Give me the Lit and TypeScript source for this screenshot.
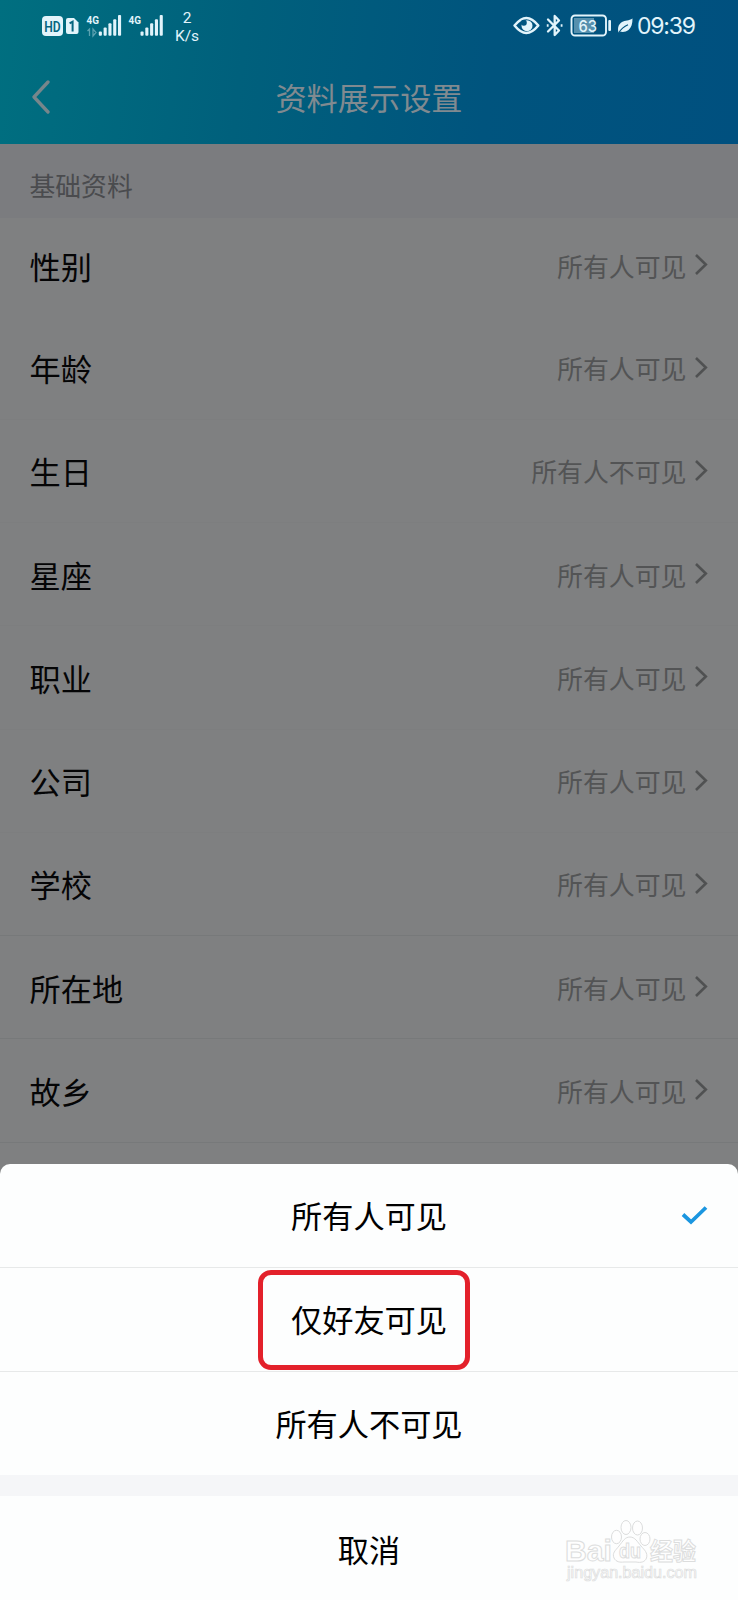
import { LitElement, html, css, svg } from "lit";
import { customElement } from "lit/decorators.js";

interface Item {
  label: string;
  value: string;
}

const ALL = "所有人可见";
const ITEMS: Item[] = [
  { label: "性别", value: ALL },
  { label: "年龄", value: ALL },
  { label: "生日", value: "所有人不可见" },
  { label: "星座", value: ALL },
  { label: "职业", value: ALL },
  { label: "公司", value: ALL },
  { label: "学校", value: ALL },
  { label: "所在地", value: ALL },
  { label: "故乡", value: ALL },
];

const bars = (x: number) =>
  [0, 1, 2, 3, 4].map(
    (i) => svg`<rect x=${x + i * 4.8} y=${31.5 - i * 4.1} width="3.1" height=${4.3 + i * 4.1} rx="1"/>`
  );

@customElement("status-bar")
class StatusBar extends LitElement {
  static styles = css`
    :host { display: flex; justify-content: space-between; height: 52px; color: #e2f4fb; font-family: Roboto, "Noto Sans", sans-serif; }
    svg { display: block; fill: currentColor; }
    .left, .right { display: flex; }
    .left { padding-left: 42px; }
    .speed { width: 40px; margin-left: 1px; padding-top: 9px; text-align: center; font-size: 15.5px; line-height: 18px; }
    .right { padding-right: 42px; }
    .time { width: 59px; padding-top: 11px; font-family: Inter, sans-serif; font-size: 23px; line-height: 31px; letter-spacing: -1.200px; white-space: nowrap; }
    .small { font: 700 11.5px "Roboto", sans-serif; }
  `;
  render() {
    return html`
      <div class="left">
        <svg width="124" height="52" viewBox="42 0 124 52">
          <rect x="42" y="16" width="21" height="20" rx="4" />
          <text x="44.3" y="31.6" font-family="Roboto" font-size="14.500" font-weight="600" fill="#05657f" textLength="16.4" lengthAdjust="spacingAndGlyphs">HD</text>
          <path d="M68 18h6l4.5 4.5v9.5a2 2 0 0 1-2 2h-8.500a2 2 0 0 1-2-2v-12a2 2 0 0 1 2-2z" />
          <path d="M69.600 23.400l3-1.700v9.700" fill="none" stroke="#05657f" stroke-width="2" />
          <text x="86.500" y="24" class="small" textLength="12.500" lengthAdjust="spacingAndGlyphs">4G</text>
          <text x="128.500" y="24" class="small" textLength="12.500" lengthAdjust="spacingAndGlyphs">4G</text>
          <path d="M87.500 31l2-2v7M93 29v7l3-3.500z" fill="none" stroke="currentColor" stroke-width="1.300" opacity=".4" />
          ${bars(98.800)} ${bars(140.500)}
        </svg>
        <div class="speed"><div>2</div><div>K/s</div></div>
      </div>
      <div class="right">
        <svg width="126" height="52" viewBox="511 0 126 52">
          <path d="M514.500 25.500C520 19 524 18 526.300 18s6.700 1 12 7.500c-5.300 6.500-9.500 7.500-12 7.500s-6.500-1-11.800-7.500z" fill="none" stroke="currentColor" stroke-width="2.500" stroke-linejoin="round" />
          <circle cx="527" cy="25.700" r="5.500" />
          <circle cx="523.800" cy="22.800" r="3" fill="#00557f" />
          <path d="M548 19.500l11 11-4.300 4.500v-19l4.300 4.500-11 11" fill="none" stroke="currentColor" stroke-width="2.300" stroke-linejoin="round" stroke-linecap="round" />
          <path d="M546.800 25.500h1.800M560.700 25.500h1.800" stroke="currentColor" stroke-width="2.500" />
          <rect x="571.500" y="15.500" width="34.500" height="20" rx="3.500" fill="none" stroke="currentColor" stroke-width="1.900" />
          <path d="M574 18h20v15h-20z" opacity=".38" />
          <rect x="608.300" y="20" width="2.700" height="11" rx="1" />
          <text x="578.600" y="31.700" font-family="Inter" font-size="16.500" font-weight="500" textLength="18.500" lengthAdjust="spacingAndGlyphs">63</text>
          <path d="M618.500 32.500c-1-4-.5-8 3.500-10.500 3-2 7-1 10.500-3.500 0 5-1 9-4 11.500-2.500 2-6 2.500-8.500 1.500l-1.500 1.500z" />
          <path d="M618.500 33c2.500-4 5.500-6.500 9.500-8.300" fill="none" stroke="#00537e" stroke-width="1.100" />
        </svg>
        <div class="time">09:39</div>
      </div>`;
  }
}

@customElement("option-sheet")
class OptionSheet extends LitElement {
  static styles = css`
    :host { display: block; height: 436px; background: #fdfefe; border-radius: 10px 10px 0 0; overflow: hidden; color: #000; font-size: 31.2px; }
    .option { position: relative; display: flex; align-items: center; justify-content: center; box-sizing: border-box; height: 104px; border-bottom: 1px solid #e7e9e9; line-height: 46px; padding-bottom: 1px; }
    .option.last { height: 103px; border-bottom: 0; }
    .check { position: absolute; right: 30px; top: 40px; }
    .gap { height: 21px; background: #f5f6f8; }
    .cancel { position: relative; display: flex; justify-content: center; height: 104px; padding-top: 30px; box-sizing: border-box; line-height: 46px; }
    .ring { position: absolute; left: 258px; top: 2px; width: 212px; height: 100px; box-sizing: border-box; border: 5px solid #e3212b; border-radius: 13px; }
    .mark { position: absolute; left: 560px; top: 20px; }
  `;
  render() {
    return html`
      <div class="option">所有人可见
        <svg class="check" width="27" height="22" viewBox="0 0 27 22"><path d="M2 10.500l8 7.500L25 3.500" fill="none" stroke="#1b96e0" stroke-width="3.800" /></svg>
      </div>
      <div class="option">仅好友可见<div class="ring"></div></div>
      <div class="option last">所有人不可见</div>
      <div class="gap"></div>
      <div class="cancel">取消
        <svg class="mark" width="150" height="72" viewBox="560 1516 150 72" fill="#fefefe" stroke="#dcdddd" stroke-width="1">
          <text x="565" y="1561" font-family="Liberation Sans" font-weight="700" font-size="29" textLength="47" lengthAdjust="spacingAndGlyphs">Bai</text>
          <ellipse cx="616.500" cy="1537" rx="5" ry="6.700" />
          <ellipse cx="626" cy="1527.500" rx="5" ry="7" />
          <ellipse cx="637.500" cy="1528" rx="5" ry="7" />
          <ellipse cx="645" cy="1539" rx="5" ry="6.500" />
          <path d="M630 1537c-5 0-7 4-11 9s-7 7-5 12c2 4 6 4.500 10 4h12c5 1 9 0 10.500-4 1.500-5-2-8-5.500-12s-6-9-11-9z" />
          <text x="619" y="1558" font-family="Liberation Sans" font-weight="700" font-size="20" textLength="22" lengthAdjust="spacingAndGlyphs">du</text>
          <text x="650" y="1560" font-family="Noto Sans CJK SC" font-weight="700" font-size="24" textLength="46" lengthAdjust="spacingAndGlyphs">经验</text>
          <text x="567" y="1578" font-family="Liberation Sans" font-size="16" fill="#fff" stroke-width=".7" textLength="130" lengthAdjust="spacingAndGlyphs">jingyan.baidu.com</text>
        </svg>
      </div>`;
  }
}

@customElement("app-root")
class AppRoot extends LitElement {
  static styles = css`
    :host { display: grid; width: 738px; height: 1600px; overflow: hidden; font-family: "Noto Sans CJK SC", sans-serif; }
    .page, .sheet { grid-area: 1 / 1; min-width: 0; }
    .page { background: #7f8081; }
    .sheet { align-self: end; z-index: 1; }
    header { height: 143.500px; background: linear-gradient(97deg, #006f80 0%, #00607c 33%, #00547e 66%, #00507f 100%); }
    .title { display: grid; grid-template-columns: 80px 1fr 80px; align-items: center; height: 91px; color: #808a90; font-size: 31.200px; }
    .title span { text-align: center; line-height: 46px; padding-bottom: 1px; }
    .back { margin-left: 31px; display: block; margin-top: -1px; }
    .section { height: 74px; box-sizing: border-box; padding: 22px 0 0 29.500px; background: #7b7c7f; color: #4a4b4e; font-size: 25.800px; line-height: 38px; }
    .row { display: flex; align-items: center; box-sizing: border-box; height: 103.250px; padding: 0 30px 0 29.500px; border-bottom: 1px solid #77797a; font-size: 31.200px; color: #050506; }
    .row.first { height: 99px; padding-bottom: 3px; }
    .row.plain { border-color: #7d7e7f; }
    .row.first { border-color: transparent; }
    .value { margin-left: auto; font-size: 25.900px; color: #535455; }
    .arrow { margin: 0 0 0 7.500px; display: block; }
  `;
  render() {
    return html`
      <main class="page">
        <header>
          <status-bar></status-bar>
          <div class="title">
            <svg class="back" width="20" height="34" viewBox="0 0 20 34"><path d="M17 2L3 17l14 15" fill="none" stroke="#77868b" stroke-width="3.300" stroke-linecap="round" stroke-linejoin="round" /></svg>
            <span>资料展示设置</span>
          </div>
        </header>
        <div class="section">基础资料</div>
        ${ITEMS.map(
          (item, i) => html`<div class="row ${i === 0 ? "first" : ""} ${i < 6 ? "plain" : ""}">
            <span>${item.label}</span><span class="value">${item.value}</span>
            <svg class="arrow" width="14" height="22" viewBox="0 0 14 22"><path d="M2 1L11.800 10.500 2 20" fill="none" stroke="#505152" stroke-width="2.600" /></svg>
          </div>`
        )}
      </main>
      <option-sheet class="sheet"></option-sheet>`;
  }
}
